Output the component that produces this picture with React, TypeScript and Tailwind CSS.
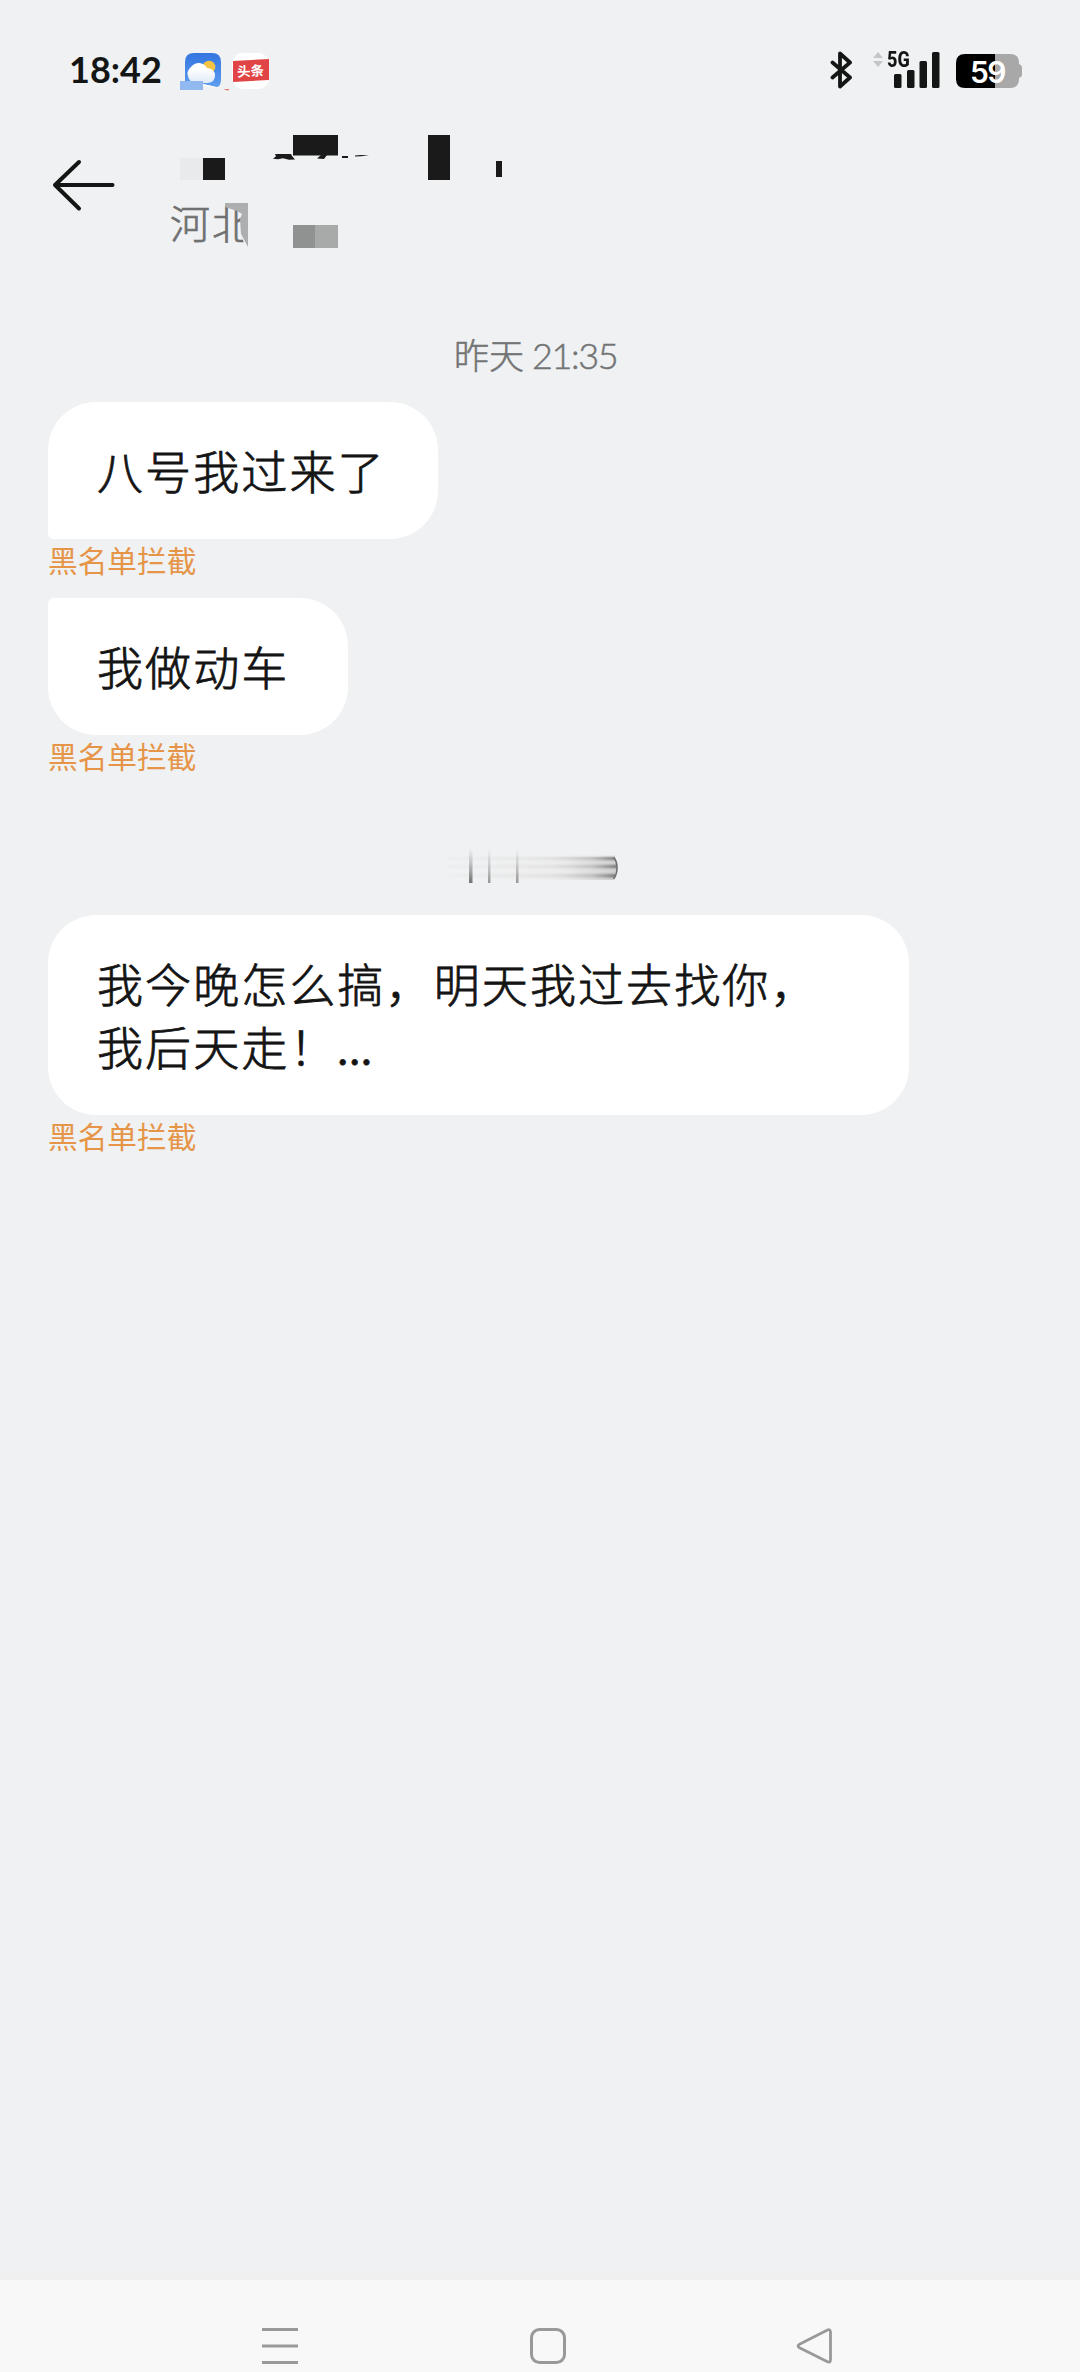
import React from "react";

const CJK = "font-['Noto_Sans_CJK_SC',sans-serif]";

function WeatherIcon() {
  return (
    <svg className="block" width="50" height="42" viewBox="0 0 50 42">
      <defs>
        <linearGradient id="sky" x1="0" y1="0" x2="0" y2="1">
          <stop offset="0" stopColor="#3475e0" />
          <stop offset="1" stopColor="#5d9df0" />
        </linearGradient>
        <linearGradient id="cloud" x1="0" y1="0" x2="0" y2="1">
          <stop offset="0.3" stopColor="#fff" />
          <stop offset="1" stopColor="#dfe9f6" />
        </linearGradient>
      </defs>
      <path d="M14 3h18q9 0 9 9v17q0 7-4 8L23 34 5 31V12Q5 3 14 3Z" fill="url(#sky)" />
      <circle cx="29" cy="17" r="6.300" fill="#f6c445" />
      <path d="M17 33a9 9 0 0 1-6-16A9.500 9.500 0 0 1 27 18q8 1 8 7.500T28 33Z" fill="url(#cloud)" />
      <path d="M0 31h23v9H0Z" fill="#92b9ef" />
      <path d="M23 34 40 38 48 39 23 36Z" fill="#fafbfc" />
      <path d="M44 39.200h5v1h-3Z" fill="#d9534f" />
    </svg>
  );
}

function NewsIcon() {
  return (
    <div className="relative h-[36px] w-[37px] rounded-[11px] bg-white">
      <svg className="absolute inset-0" width="37" height="36" viewBox="0 0 37 36">
        <path d="M1 8 37 6v21L1 29Z" fill="#e04444" />
      </svg>
      <span className="absolute left-0 top-[6px] w-[37px] -rotate-3 whitespace-nowrap text-center font-['Noto_Sans_CJK_SC',sans-serif] text-[13.500px] font-bold leading-[23px] text-white">
        头条
      </span>
    </div>
  );
}

function StatusBar() {
  return (
    <div className="flex h-[110px] items-start pt-[50px]">
      <span className="ml-[69px] w-[111px] whitespace-nowrap pt-[1px] font-['Lato',sans-serif] text-[36px] font-bold leading-[37px] text-[#141615]">
        18:42
      </span>
      <WeatherIcon />
      <div className="ml-[2px] pt-[3px]">
        <NewsIcon />
      </div>
      <svg className="ml-[561px] block shrink-0" width="24" height="40" viewBox="0 0 24 40">
        <path d="M2.500 12.500 20 27.500 10 36.500V3.500L20 12.500 2.500 27.500" fill="none" stroke="#141615" strokeWidth="3.800" strokeLinecap="round" strokeLinejoin="round" />
      </svg>
      <div className="relative ml-[17px] h-[40px] w-[70px] shrink-0">
        <svg className="block" width="70" height="40" viewBox="0 0 70 40">
          <path d="M2 8 7 2l5 6ZM2 11h10l-5 6Z" fill="#c4c5c6" />
          <rect x="23" y="24" width="7.500" height="14" rx="1.500" fill="#141615" />
          <rect x="36" y="20" width="7.500" height="18" rx="1.500" fill="#141615" />
          <rect x="48.500" y="11" width="7.500" height="27" rx="1.500" fill="#141615" />
          <rect x="61" y="2" width="7.500" height="36" rx="1.500" fill="#141615" />
        </svg>
        <span className="absolute left-[16px] top-[-4px] origin-left scale-x-[0.82] whitespace-nowrap font-['Roboto',sans-serif] text-[22px] font-extrabold leading-[27px] text-[#141615]">
          5G
        </span>
      </div>
      <div className="relative ml-[15px] mt-[4px] h-[34px] w-[68px]">
        <svg className="block" width="68" height="34" viewBox="0 0 68 34">
          <path d="M39 0h15q9 0 9 9v1q3 1 3 4v7q0 2-3 3v1q0 9-9 9H39Z" fill="#a8a8a8" />
          <path d="M39 0H9Q0 0 0 9v16q0 9 9 9h30Z" fill="#000" />
        </svg>
        <span className="absolute left-0 top-0 w-[63px] text-center font-['Inter',sans-serif] text-[30px] font-semibold leading-[36px] tracking-[-1.500px] text-white">
          59
        </span>
      </div>
    </div>
  );
}

function Header() {
  return (
    <div className="flex h-[190px] items-start">
      <svg className="ml-[50px] mt-[48px] block shrink-0" width="68" height="56" viewBox="0 0 68 56">
        <path d="M62.500 27H5M29 4 5 27l24 23.500" fill="none" stroke="#141615" strokeWidth="4" strokeLinecap="round" strokeLinejoin="round" />
      </svg>
      <div className="relative ml-[50px] h-[150px] w-[360px]">
        <div className="pl-[2px] pt-[83px] font-['Noto_Sans_CJK_SC',sans-serif] text-[40px] font-light leading-[58px] tracking-[2px] text-[#6f7070] [-webkit-text-stroke:0.7px_#6f7070]">
          河北
        </div>
        <svg className="absolute left-0 top-0" width="360" height="150" viewBox="168 110 360 150">
          <rect x="180" y="158" width="23" height="22" fill="#e9eaeb" />
          <rect x="203" y="158" width="22" height="22" fill="#191a19" />
          <path d="M293 135h45v20.500H293Z" fill="#191a19" />
          <path d="M275 154h16l1 2 3 3.500-6 .200-6-1.500-5 1-5-.400 3-2.500ZM321 155h6l-3 4-7-.500ZM342 156h6v2h-6ZM355 155.500l6-.500 8 .300-8 1-6 .300Z" fill="#191a19" />
          <rect x="428" y="135" width="22" height="45" fill="#191a19" />
          <rect x="496" y="161" width="6" height="16" fill="#191a19" />
          <path d="M244 212 252 208v40h-7l-2-8Z" fill="#eff1f3" />
          <path d="M225 203h23v44l-7-13-1-15 2-5-5-3-12-4Z" fill="#adaeaf" />
          <rect x="293" y="225" width="22" height="23" fill="#909291" />
          <rect x="315" y="225" width="23" height="23" fill="#a8a9a9" />
        </svg>
      </div>
    </div>
  );
}

function BlockedLabel() {
  return (
    <div className="ml-[48px] h-[59px] font-['Noto_Sans_CJK_SC',sans-serif] text-[29.700px] leading-[41px] text-[#e69548]">
      黑名单拦截
    </div>
  );
}

function SmearedTime() {
  return (
    <svg className="ml-[440px] mt-[48px] block" width="184" height="44" viewBox="440 842 184 44">
      <defs>
        <linearGradient id="smear" gradientUnits="userSpaceOnUse" x1="448" y1="0" x2="617" y2="0">
          <stop offset="0" stopColor="#e4e5e5" stopOpacity="0.3" />
          <stop offset="0.6" stopColor="#cfd0d0" stopOpacity="0.4" />
          <stop offset="0.85" stopColor="#a8a9a9" stopOpacity="0.6" />
          <stop offset="1" stopColor="#6e6e6e" />
        </linearGradient>
        <linearGradient id="drip" x1="0" y1="0" x2="0" y2="1">
          <stop offset="0" stopColor="#999" stopOpacity="0" />
          <stop offset="1" stopColor="#707070" />
        </linearGradient>
        <linearGradient id="haze" x1="0" y1="0" x2="1" y2="0">
          <stop offset="0" stopColor="#f4f4f4" stopOpacity="0.3" />
          <stop offset="0.7" stopColor="#ebebeb" />
          <stop offset="1" stopColor="#d0d0d0" />
        </linearGradient>
        <filter id="soft" x="-5%" y="-40%" width="110%" height="180%">
          <feGaussianBlur stdDeviation="0.4 1.1" />
        </filter>
      </defs>
      <path d="M448 857H613q4 4 4 11t-4 12H448Z" fill="url(#haze)" />
      <g filter="url(#soft)">
        <rect x="448" y="857" width="167" height="3" fill="url(#smear)" />
        <rect x="448" y="865" width="169" height="3" fill="url(#smear)" />
        <rect x="448" y="874" width="167" height="3.500" fill="url(#smear)" />
      </g>
      <path d="M614 857.500q3 4 3 10.500t-3.500 11" fill="none" stroke="#707070" strokeWidth="1.600" />
      <rect x="469" y="848" width="3.500" height="35" fill="url(#drip)" />
      <rect x="488" y="848" width="2.500" height="35" fill="url(#drip)" opacity="0.7" />
      <rect x="516" y="848" width="2.500" height="35" fill="url(#drip)" opacity="0.7" />
    </svg>
  );
}

const bubbleText =
  "bg-white ml-[48px] pl-[49px] pt-[36px] font-['Noto_Sans_CJK_SC',sans-serif] text-[46px] font-light leading-[63px] tracking-[2.100px] text-[#141414] [-webkit-text-stroke:0.8px_#141414] whitespace-nowrap";

function NavBar() {
  return (
    <div className="flex h-[100px] items-start border-t-8 border-[#f0f0f0] bg-[#f8f8f8] pt-[45px]">
      <svg className="ml-[262px] block" width="36" height="42" viewBox="0 0 36 42">
        <path d="M0 4.500h36M0 21h36M0 37.500h36" stroke="#999" strokeWidth="3" />
      </svg>
      <svg className="ml-[230px] block" width="40" height="42" viewBox="0 0 40 42">
        <rect x="3.500" y="4.500" width="33" height="33" rx="8" fill="none" stroke="#999" strokeWidth="3" />
      </svg>
      <svg className="ml-[227px] block" width="40" height="42" viewBox="0 0 40 42">
        <path d="M32 5.200Q35.500 3.500 35.500 7.500V34.500Q35.500 38.500 32 36.600L4.500 22.800Q1.500 21 4.500 19.200Z" fill="none" stroke="#999" strokeWidth="2.800" strokeLinejoin="round" />
      </svg>
    </div>
  );
}

export default function App() {
  return (
    <div className={`flex h-[2372px] w-[1080px] flex-col overflow-hidden bg-[#eff1f3] ${CJK}`}>
      <StatusBar />
      <Header />
      <main className="flex flex-1 flex-col">
        <div className="flex h-[102px] items-start pl-[454px] pt-[29px] text-[35px] font-light leading-[50px] text-[#737474] [-webkit-text-stroke:0.5px_#737474]">
          <span>昨天</span>
          <span className="ml-[8px] font-['Lato',sans-serif] text-[36px] font-light leading-[52px] tracking-[-1.400px]">21:35</span>
        </div>
        <div className={`${bubbleText} h-[137px] w-[390px] rounded-[48px] rounded-bl-[6px]`}>八号我过来了</div>
        <BlockedLabel />
        <div className={`${bubbleText} h-[137px] w-[300px] rounded-[48px] rounded-tl-[6px]`}>我做动车</div>
        <BlockedLabel />
        <div className="h-[121px]">
          <SmearedTime />
        </div>
        <div className={`${bubbleText} h-[200px] w-[861px] rounded-[48px]`}>
          <p>我今晚怎么搞，明天我过去找你，</p>
          <p>
            我后天走！<span className="font-['Lato',sans-serif] text-[44px] font-normal tracking-[1.500px]">...</span>
          </p>
        </div>
        <BlockedLabel />
      </main>
      <NavBar />
    </div>
  );
}
